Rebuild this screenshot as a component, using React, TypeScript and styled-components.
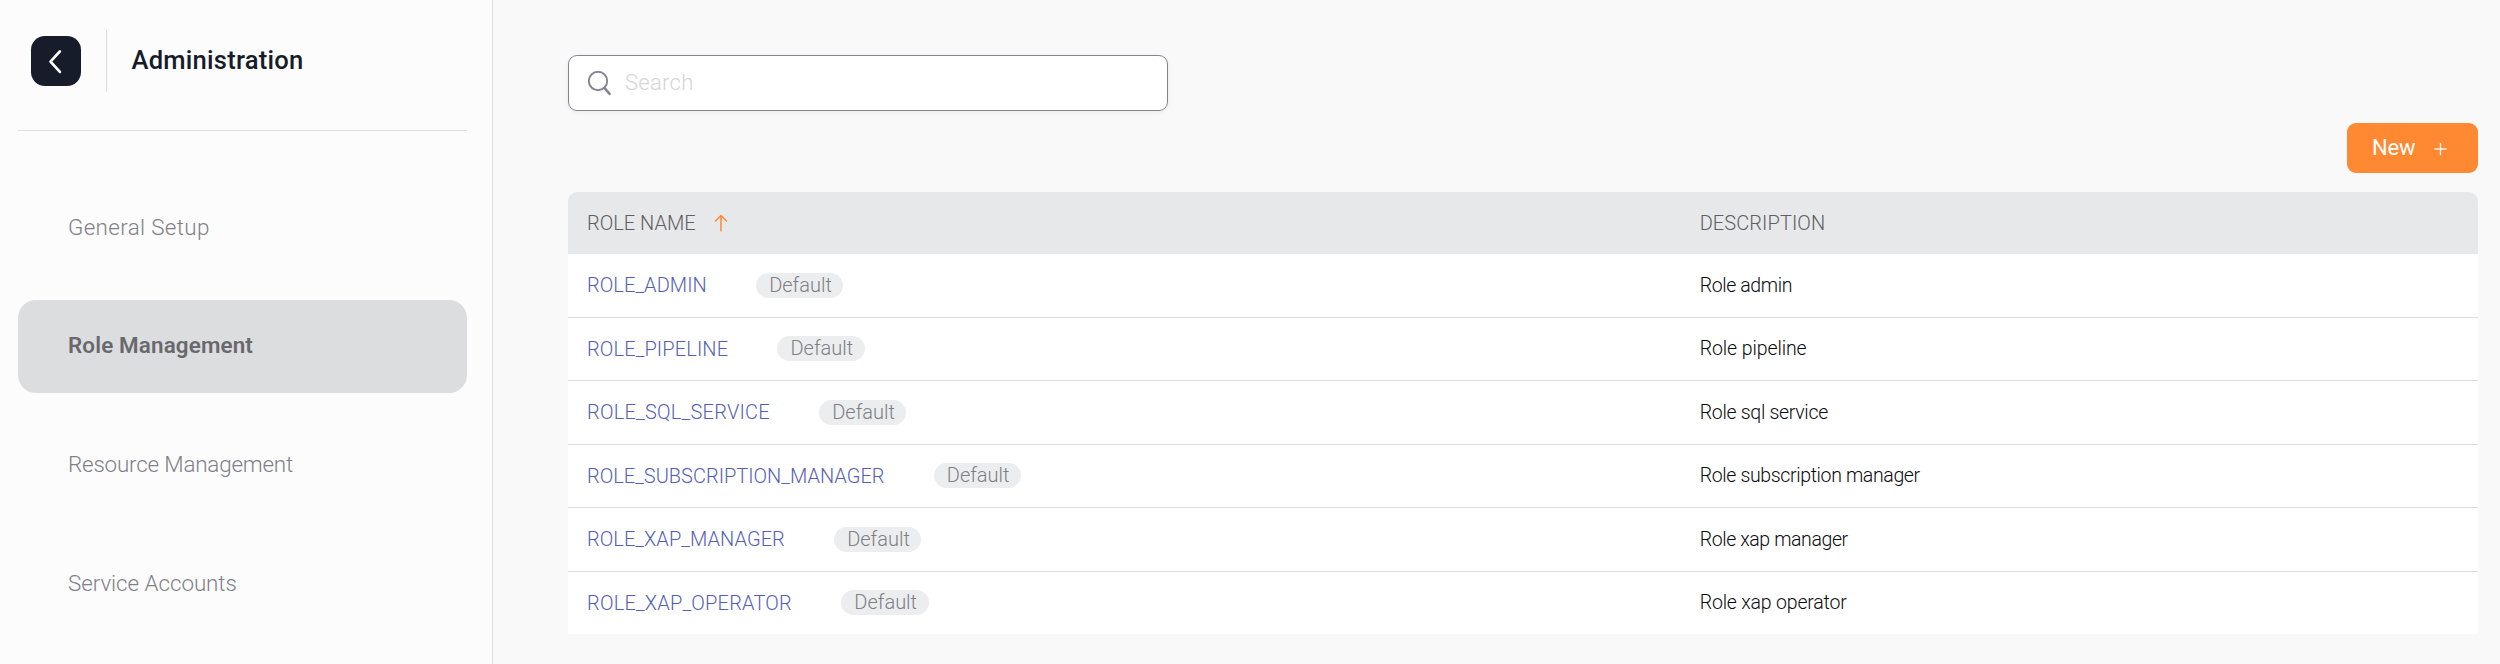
import React from "react";
import styled, { createGlobalStyle } from "styled-components";

const GlobalStyle = createGlobalStyle`
  *, *::before, *::after { box-sizing: border-box; }
  body {
    margin: 0;
    background: #f9f9f9;
    font-family: Roboto, "Liberation Sans", sans-serif;
    font-weight: 300;
  }
`;

const Page = styled.div`
  display: flex;
  height: 664px;
  overflow: hidden;
`;

const Sidebar = styled.aside`
  flex: none;
  width: 493px;
  padding: 30px 25px 0 18px;
  background: #fcfcfc;
  border-right: 1px solid #dcdddf;
`;

const SidebarHeader = styled.header`
  display: flex;
  align-items: center;
  height: 101px;
  padding: 0 0 38px 13px;
  border-bottom: 1px solid #dcdddf;
`;

const BackButton = styled.button`
  display: flex;
  width: 50px;
  height: 50px;
  padding: 0;
  border: 0;
  border-radius: 14px;
  background: #171c2a;
`;

const Divider = styled.div`
  width: 1px;
  height: 62px;
  margin: 0 24.5px 0 25px;
  background: #dcdddf;
`;

const Title = styled.h1`
  margin: 0 0 2px;
  font-size: 25.6px;
  line-height: 30px;
  font-weight: 500;
  letter-spacing: 0.22px;
  color: #171c2a;
`;

const Nav = styled.nav`
  display: flex;
  flex-direction: column;
  gap: 25.67px;
  padding-top: 50.3px;
`;

const NavItem = styled.a<{ $active?: boolean; $spacing: number }>`
  display: flex;
  flex: none;
  align-items: center;
  height: 93px;
  padding: 0 0 2px 50px;
  border-radius: 18px;
  background: ${(p) => (p.$active ? "#dcdddf" : "transparent")};
  color: ${(p) => (p.$active ? "#68696d" : "#7f8189")};
  font-size: 22.4px;
  line-height: 26px;
  font-weight: ${(p) => (p.$active ? 600 : 300)};
  letter-spacing: ${(p) => p.$spacing}px;
`;

const Main = styled.main`
  flex: 1;
  display: flex;
  flex-direction: column;
  padding: 55px 22px 0 75px;
  background: #f9f9f9;
`;

const SearchBox = styled.div`
  display: flex;
  align-items: center;
  width: 600px;
  height: 56px;
  padding-left: 18px;
  border: 1px solid #858590;
  border-radius: 9px;
  background: #fff;
  box-shadow: 0 2px 5px rgba(0, 0, 0, 0.06);
`;

const SearchLabel = styled.span`
  margin: 0 0 2px 12px;
  font-size: 22px;
  letter-spacing: 0.3px;
  color: #d3d5d9;
`;

const NewButton = styled.button`
  display: flex;
  align-items: center;
  align-self: flex-end;
  width: 131px;
  height: 50px;
  margin: 12px 0 19px;
  padding: 0 0 2px 25px;
  border: 0;
  border-radius: 9px;
  background: #ff8833;
  color: #fff;
  font: 400 22px Roboto, "Liberation Sans", sans-serif;
  letter-spacing: -0.2px;
`;

const PlusIcon = styled.svg`
  margin: 4px 0 0 17.5px;
`;

const Table = styled.div`
  border-radius: 9px 9px 0 0;
  overflow: hidden;
  background: #fff;
  font-size: 20px;
`;

const Row = styled.div`
  display: grid;
  grid-template-columns: 1112.7px 1fr;
  align-items: center;
  height: 63.5px;
  padding-left: 19px;
  border-bottom: 1px solid #dcdddf;

  &:last-child {
    height: 62.5px;
    border-bottom: 0;
  }
`;

const HeaderRow = styled(Row)`
  height: 62px;
  border-bottom: 0;
  background: #e7e8ea;
  color: #5e5f63;
`;

const Cell = styled.div`
  display: flex;
  align-items: center;
`;

const Label = styled.span<{ $spacing: number }>`
  letter-spacing: ${(p) => p.$spacing}px;
`;

const RoleLink = styled(Label)`
  color: #5560b4;
`;

const Description = styled(Label)`
  color: #0a0a0f;
  font-size: 19.5px;
`;

const Badge = styled.span`
  height: 25px;
  margin-left: 49.3px;
  padding: 0 11.5px 0 13px;
  border-radius: 13px;
  background: #ecedef;
  color: #7d7f84;
  line-height: 25px;
`;

const SortIcon = styled.svg`
  margin-left: 18px;
`;

const navItems = [
  { label: "General Setup", spacing: 0.35 },
  { label: "Role Management", spacing: 0.15, active: true },
  { label: "Resource Management", spacing: -0.19 },
  { label: "Service Accounts", spacing: -0.06 },
];

const roles = [
  { name: "ROLE_ADMIN", nameSpacing: 0.06, text: "Role admin", textSpacing: -0.39 },
  { name: "ROLE_PIPELINE", nameSpacing: 0.12, text: "Role pipeline", textSpacing: -0.1 },
  { name: "ROLE_SQL_SERVICE", nameSpacing: 0.23, text: "Role sql service", textSpacing: -0.3 },
  { name: "ROLE_SUBSCRIPTION_MANAGER", nameSpacing: 0, text: "Role subscription manager", textSpacing: -0.36 },
  { name: "ROLE_XAP_MANAGER", nameSpacing: 0.05, text: "Role xap manager", textSpacing: -0.4 },
  { name: "ROLE_XAP_OPERATOR", nameSpacing: 0.2, text: "Role xap operator", textSpacing: -0.19 },
];

export default function App() {
  return (
    <>
      <GlobalStyle />
      <Page>
        <Sidebar>
          <SidebarHeader>
            <BackButton aria-label="Back">
              <svg width="50" height="50" viewBox="0 0 50 50" fill="none">
                <path d="M28.9 15.4 19.5 25.6l9.4 10.3" stroke="#fff" strokeWidth="2.7" strokeLinecap="round" strokeLinejoin="round" />
              </svg>
            </BackButton>
            <Divider />
            <Title>Administration</Title>
          </SidebarHeader>
          <Nav>
            {navItems.map((item) => (
              <NavItem key={item.label} $active={item.active} $spacing={item.spacing}>
                {item.label}
              </NavItem>
            ))}
          </Nav>
        </Sidebar>
        <Main>
          <SearchBox>
            <svg width="26" height="26" viewBox="0 0 26 26" fill="none" stroke="#858590" strokeLinecap="round">
              <circle cx="11" cy="11" r="9.2" strokeWidth="1.9" />
              <path d="m17.6 18.2 5 5.6" strokeWidth="2.6" />
            </svg>
            <SearchLabel>Search</SearchLabel>
          </SearchBox>
          <NewButton>
            New
            <PlusIcon width="14" height="14" viewBox="0 0 14 14" fill="none" stroke="#fff" strokeOpacity="0.9" strokeWidth="1.4" strokeLinecap="round">
              <path d="M7.5 1.5v11M2 7h11" />
            </PlusIcon>
          </NewButton>
          <Table>
            <HeaderRow>
              <Cell>
                <Label $spacing={0}>ROLE NAME</Label>
                <SortIcon width="14" height="18" viewBox="0 0 14 18" fill="none" stroke="#ff8833" strokeWidth="1.5" strokeLinecap="round" strokeLinejoin="round">
                  <path d="M7 16.7V1.5M1.5 7 7 1.5 12.5 7" />
                </SortIcon>
              </Cell>
              <Label $spacing={0.08}>DESCRIPTION</Label>
            </HeaderRow>
            {roles.map((role) => (
              <Row key={role.name}>
                <Cell>
                  <RoleLink $spacing={role.nameSpacing}>{role.name}</RoleLink>
                  <Badge>Default</Badge>
                </Cell>
                <Description $spacing={role.textSpacing}>{role.text}</Description>
              </Row>
            ))}
          </Table>
        </Main>
      </Page>
    </>
  );
}
